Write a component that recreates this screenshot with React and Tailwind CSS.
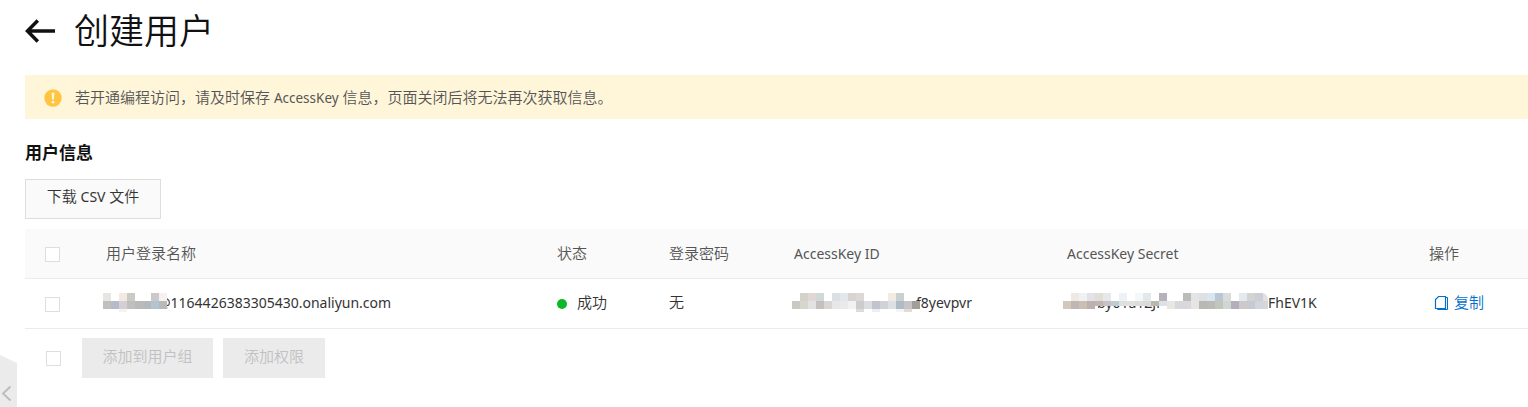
import React from "react";

// Censored parts of the keys: rows of 8px tiles, "" leaves a tile empty
const NAME_MASK = [
  ["#e6e6e2", "", "#f2e9e2", "#c9cbc4", "", "", "#cacaca", "#f7f0f2"],
  ["#c0c0bd", "#b5bbca", "#d5ced5", "#bfc0bd", "#babbb9", "#b4b9bb", "#b2c4d0", "#b9bab7"],
  ["", "", "#f7f1ef", "", "", "", "", ""],
];

const ID_MASK = [
  ["", "#d3d2cd", "#dfd8d5", "#d2d7d8", "", "#dcdfe4", "#e2e7eb", "#d8d2d0", "#dcd8d5", "", "", "", "#f3ebe2", "#cbd1d0", "", ""],
  ["#c9c9c3", "#d6d6cb", "#e2e2e2", "#c5c0bd", "#d8d6d4", "#e7e7e5", "#eaeaec", "#f1f1f1", "#cbcdcd", "#dcdce1", "#c2c4cd", "#d1d2d8", "#dae0e3", "#afbcc6", "#c6c4c7", "#a19f9b"],
  ["", "", "", "", "", "", "", "", "#dcdcdc", "", "#edeef5", "", "", "#f5f5f5", "#e2dbd6", ""],
];

const SECRET_MASK = [
  ["#ffffff", "#efe9e4", "#eff2f4", "#e2e2e8", "#dfdfda", "#e8e8ea", "#ffffff", "#ecf2f5", "#ffffff", "#f5f8f8", "#e2e9ec", "#ffffff", "#b6b1bb", "#ffffff", "#ffffff", "#b9bcb9", "#e3e4e8", "#dfe1e1", "#d9e6f2", "#b8c7d4", "#dadcdc", "", "#e4e9ed", "#d3d3d2", "#cdcdd4", "#e4dfe6"],
  ["#d2c9bc", "#beb7b3", "#cbbfb4", "#bcb1b0", "#c2b5b1", "#c9c1c5", "#becbd3", "#dee0df", "#e1e2df", "#dedddc", "#ddd9d9", "#b9b8b0", "#dbe1e5", "#e6e6e2", "#d8d8dc", "#d9d9db", "#e7e4e2", "#b7b9b5", "#babab7", "#c2c5b9", "#d0d6d0", "#b3aebc", "#cdc8c9", "#c9c9d3", "#cfd7da", "#d3d9da"],
];

// shortFrom/shortTo: tiles of the second row that end early and let the text show below
const Mask = ({ rows, shortFrom = -1, shortTo = -1 }) => (
  <span className="relative z-10 flex flex-col shrink-0 h-[19px]">
    {rows.map((row, i) => (
      <span key={i} className={i === 2 ? "flex h-[3px]" : "flex h-2"}>
        {row.map((color, j) => (
          <span
            key={j}
            className={i === 1 && j >= shortFrom && j <= shortTo ? "w-2 h-[5px] shrink-0" : "w-2 shrink-0"}
            style={{ backgroundColor: color || "transparent" }}
          />
        ))}
      </span>
    ))}
  </span>
);

const Checkbox = () => (
  <span className="block w-[15px] h-[15px] border border-[#dedede] bg-white" />
);

const BackArrow = () => (
  <svg className="w-[30px] h-6" viewBox="0 0 30 24" fill="none" stroke="#111" strokeWidth="3.5">
    <path d="M2.5 12H30M12.8 1.5L2.5 12l10.3 10.5" />
  </svg>
);

const WarningIcon = () => (
  <svg className="w-[18px] h-[18px]" viewBox="0 0 18 18">
    <circle cx="9" cy="9" r="8.7" fill="#ffc440" />
    <path d="M7.6 3.8h2.8L10 10.6H8z" fill="#fff6da" />
    <circle cx="9" cy="13.2" r="1.4" fill="#fff6da" />
  </svg>
);

const CopyIcon = () => (
  <svg className="w-[14px] h-[16px]" viewBox="0 0 14 16" fill="none" stroke="#0070cc">
    <path d="M4.5 1.5H11.5V13.5H1.5V4.5z" strokeWidth="1.2" />
    <path d="M11.5 2.5h2v12H3.5V13.5" />
  </svg>
);

const App = () => {
  return (
    <div className="relative h-[407px] overflow-hidden bg-white pl-[25px] text-[15px] leading-5 font-[350] text-[#333] whitespace-nowrap font-['Noto_Sans','Noto_Sans_CJK_SC',sans-serif]">
      {/* Page title */}
      <div className="flex items-center h-[75px] pb-[13px]">
        <BackArrow />
        <h1 className="ml-[19px] text-[35px] leading-[44px] text-[#111]">创建用户</h1>
      </div>

      {/* Warning bar */}
      <div className="flex items-center h-11 pl-[19px] bg-[#fff6da] text-[#555]">
        <span className="pt-[2px]">
          <WarningIcon />
        </span>
        <p className="ml-[13px]">
          若开通编程访问，请及时保存 <span className="text-[13.5px] font-normal">AccessKey</span> 信息，页面关闭后将无法再次获取信息。
        </p>
      </div>

      <h2 className="mt-[22px] text-[17px] leading-6 font-bold text-[#111]">用户信息</h2>

      <button className="flex justify-center mt-[14px] w-[136px] h-10 pt-[6px] border border-[#dedede] bg-[#fafafa]">
        <span>
          下载 <span className="text-[14px] font-normal">CSV</span> 文件
        </span>
      </button>

      {/* User table */}
      <div className="mt-[10px]">
        <div className="grid grid-cols-[81px_451px_112px_125px_273px_362px_1fr] items-center h-[50px] border-b border-[#ebebeb] bg-[#fafafa] text-[#555]">
          <span className="pl-5 pt-[2px]">
            <Checkbox />
          </span>
          <span className="pb-[2px]">用户登录名称</span>
          <span className="pb-[2px]">状态</span>
          <span className="pb-[2px]">登录密码</span>
          <span className="text-[14px] font-normal">AccessKey ID</span>
          <span className="text-[14px] font-normal">AccessKey Secret</span>
          <span className="pb-[2px]">操作</span>
        </div>

        <div className="grid grid-cols-[78px_454px_112px_123px_271px_371px_1fr] items-center h-[50px] pb-[2px] border-b border-[#ebebeb]">
          <span className="pl-5 pt-1">
            <Checkbox />
          </span>
          <span className="flex items-center">
            <Mask rows={NAME_MASK} />
            <span className="-ml-[9px] text-[14px] font-normal">@1164426383305430.onaliyun.com</span>
          </span>
          <span className="flex items-center">
            <span className="w-[10px] h-[10px] mt-[2px] mr-[10px] rounded-full bg-[#0ab82a]" />
            <span className="pb-[2px]">成功</span>
          </span>
          <span className="pb-[2px]">无</span>
          <span className="flex items-center">
            <Mask rows={ID_MASK} />
            <span className="-ml-1 text-[14px] font-normal">f8yevpvr</span>
          </span>
          <span className="flex items-center">
            <span className="relative w-[205px] overflow-hidden rounded-tr-md">
              {/* part of the secret that shows under the mask's lower edge */}
              <span className="absolute left-[34px] top-0 leading-[19px] text-[14px] font-normal">by01a1ZJr</span>
              <Mask rows={SECRET_MASK} shortFrom={4} shortTo={12} />
            </span>
            <span className="text-[14px] font-normal">FhEV1K</span>
          </span>
          <span className="flex items-center text-[#0070cc]">
            <CopyIcon />
            <span className="ml-[6px] pb-[2px]">复制</span>
          </span>
        </div>
      </div>

      {/* Batch actions */}
      <div className="flex items-center mt-[9px] h-10 pl-[21px] text-[#c1c1c1]">
        <Checkbox />
        <button className="ml-[21px] w-[131px] h-10 pb-1 bg-[#ebebeb]">添加到用户组</button>
        <button className="ml-[10px] w-[102px] h-10 pb-1 bg-[#ebebeb]">添加权限</button>
      </div>

      {/* Collapse handle of the side menu */}
      <svg className="absolute left-0 bottom-0 w-[17px] h-[52px]" viewBox="0 0 17 52" fill="none">
        <path d="M0 0L17 8V52H0z" fill="#ebebeb" />
        <path d="M10.5 31.5L3 38.5l7.5 7" stroke="#bbb" strokeWidth="1.8" />
      </svg>
    </div>
  );
};

export default App;
